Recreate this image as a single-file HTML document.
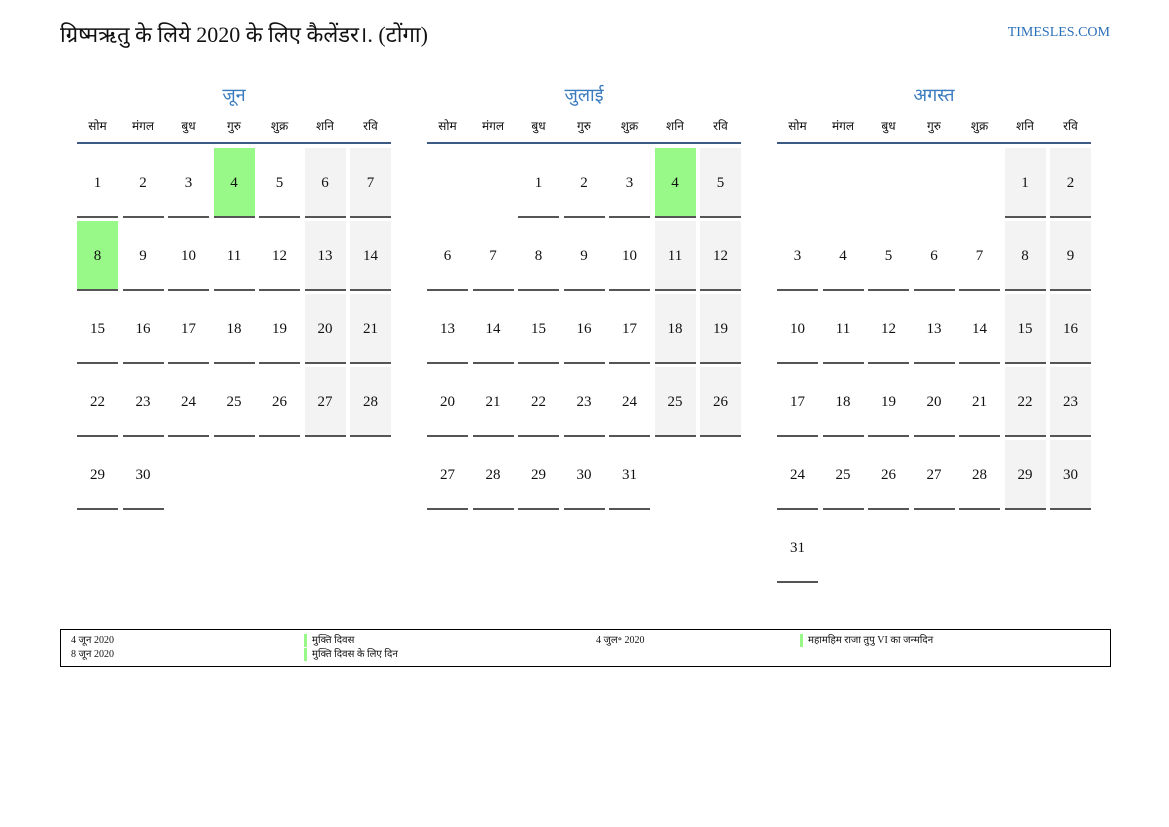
<!DOCTYPE html>
<html><head><meta charset="utf-8"><style>
*{margin:0;padding:0;box-sizing:border-box}
body{width:1169px;height:827px;background:#fff;font-family:"Liberation Serif","DejaVu Serif",serif;color:#111;position:relative;overflow:hidden}
.title{position:absolute;left:60px;top:19px;font-size:22px}
.site{position:absolute;right:59px;top:25px;font-size:14px;color:#2a6fb8}
.m{position:absolute;top:83px;width:314px}
.mt{text-align:center;color:#3a7bbf;font-size:18px;height:24px;line-height:24px}
.dn{display:grid;grid-template-columns:repeat(7,41px);column-gap:4.5px;height:37px;border-bottom:2px solid #3d5a85;font-size:12px;text-align:center;line-height:38px}
.g{display:grid;grid-template-columns:repeat(7,41px);column-gap:4.5px;row-gap:3px;margin-top:4px}
.g div{height:70px;line-height:70px;text-align:center;font-size:15px;border-bottom:2px solid #555}
.g .w{background:#f3f3f3}
.g .h{background:#98f888}
.g .e{border-bottom:none}
.leg{position:absolute;left:60px;top:629px;width:1051px;height:38px;border:1px solid #000;font-size:10px}
.leg span{position:absolute;line-height:13px}
.bar{border-left:3px solid #98f888;padding-left:5px}
</style></head><body>
<div class="title">ग्रिष्मऋतु के लिये 2020 के लिए कैलेंडर।. (टोंगा)</div>
<div class="site">TIMESLES.COM</div>

<div class="m" style="left:77px">
<div class="mt">जून</div>
<div class="dn"><span>सोम</span><span>मंगल</span><span>बुध</span><span>गुरु</span><span>शुक्र</span><span>शनि</span><span>रवि</span></div>
<div class="g">
<div>1</div><div>2</div><div>3</div><div class="h">4</div><div>5</div><div class="w">6</div><div class="w">7</div>
<div class="h">8</div><div>9</div><div>10</div><div>11</div><div>12</div><div class="w">13</div><div class="w">14</div>
<div>15</div><div>16</div><div>17</div><div>18</div><div>19</div><div class="w">20</div><div class="w">21</div>
<div>22</div><div>23</div><div>24</div><div>25</div><div>26</div><div class="w">27</div><div class="w">28</div>
<div>29</div><div>30</div>
</div></div>

<div class="m" style="left:427px">
<div class="mt">जुलाई</div>
<div class="dn"><span>सोम</span><span>मंगल</span><span>बुध</span><span>गुरु</span><span>शुक्र</span><span>शनि</span><span>रवि</span></div>
<div class="g">
<div class="e"></div><div class="e"></div><div>1</div><div>2</div><div>3</div><div class="h">4</div><div class="w">5</div>
<div>6</div><div>7</div><div>8</div><div>9</div><div>10</div><div class="w">11</div><div class="w">12</div>
<div>13</div><div>14</div><div>15</div><div>16</div><div>17</div><div class="w">18</div><div class="w">19</div>
<div>20</div><div>21</div><div>22</div><div>23</div><div>24</div><div class="w">25</div><div class="w">26</div>
<div>27</div><div>28</div><div>29</div><div>30</div><div>31</div>
</div></div>

<div class="m" style="left:777px">
<div class="mt">अगस्त</div>
<div class="dn"><span>सोम</span><span>मंगल</span><span>बुध</span><span>गुरु</span><span>शुक्र</span><span>शनि</span><span>रवि</span></div>
<div class="g">
<div class="e"></div><div class="e"></div><div class="e"></div><div class="e"></div><div class="e"></div><div class="w">1</div><div class="w">2</div>
<div>3</div><div>4</div><div>5</div><div>6</div><div>7</div><div class="w">8</div><div class="w">9</div>
<div>10</div><div>11</div><div>12</div><div>13</div><div>14</div><div class="w">15</div><div class="w">16</div>
<div>17</div><div>18</div><div>19</div><div>20</div><div>21</div><div class="w">22</div><div class="w">23</div>
<div>24</div><div>25</div><div>26</div><div>27</div><div>28</div><div class="w">29</div><div class="w">30</div>
<div>31</div>
</div></div>

<div class="leg">
<span style="left:10px;top:4px">4 जून 2020</span>
<span style="left:10px;top:18px">8 जून 2020</span>
<span class="bar" style="left:243px;top:4px">मुक्ति दिवस</span>
<span class="bar" style="left:243px;top:18px">मुक्ति दिवस के लिए दिन</span>
<span style="left:535px;top:4px">4 जुल॰ 2020</span>
<span class="bar" style="left:739px;top:4px">महामहिम राजा तुपु VI का जन्मदिन</span>
</div>
</body></html>
